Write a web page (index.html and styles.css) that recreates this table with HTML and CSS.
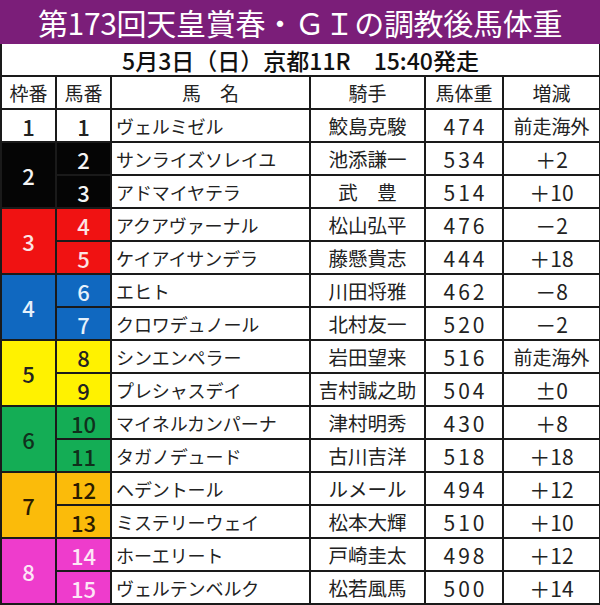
FILE: index.html
```html
<!DOCTYPE html>
<html lang="ja">
<head>
<meta charset="utf-8">
<link rel="stylesheet" href="styles.css">
</head>
<body>
<div class="title">第173回天皇賞春・ＧＩの調教後馬体重</div>
<table class="tbl">
<colgroup>
<col class="c1"><col class="c2"><col class="c3"><col class="c4"><col class="c5"><col class="c6">
</colgroup>
<tr class="sub"><td colspan="6">5月3日（日）京都11R　15:40発走</td></tr>
<tr class="head"><td>枠番</td><td>馬番</td><td>馬　名</td><td>騎手</td><td>馬体重</td><td>増減</td></tr>
<tr><td class="w f1">1</td><td class="n f1">1</td><td class="name">ヴェルミゼル</td><td class="jk">鮫島克駿</td><td class="wt">474</td><td class="df sm">前走海外</td></tr>
<tr><td class="w f2" rowspan="2">2</td><td class="n f2">2</td><td class="name">サンライズソレイユ</td><td class="jk">池添謙一</td><td class="wt">534</td><td class="df">＋2</td></tr>
<tr><td class="n f2">3</td><td class="name">アドマイヤテラ</td><td class="jk">武　豊</td><td class="wt">514</td><td class="df">＋10</td></tr>
<tr><td class="w f3" rowspan="2">3</td><td class="n f3">4</td><td class="name">アクアヴァーナル</td><td class="jk">松山弘平</td><td class="wt">476</td><td class="df">－2</td></tr>
<tr><td class="n f3">5</td><td class="name">ケイアイサンデラ</td><td class="jk">藤懸貴志</td><td class="wt">444</td><td class="df">＋18</td></tr>
<tr><td class="w f4" rowspan="2">4</td><td class="n f4">6</td><td class="name">エヒト</td><td class="jk">川田将雅</td><td class="wt">462</td><td class="df">－8</td></tr>
<tr><td class="n f4">7</td><td class="name">クロワデュノール</td><td class="jk">北村友一</td><td class="wt">520</td><td class="df">－2</td></tr>
<tr><td class="w f5" rowspan="2">5</td><td class="n f5">8</td><td class="name">シンエンペラー</td><td class="jk">岩田望来</td><td class="wt">516</td><td class="df sm">前走海外</td></tr>
<tr><td class="n f5">9</td><td class="name">プレシャスデイ</td><td class="jk">吉村誠之助</td><td class="wt">504</td><td class="df">±0</td></tr>
<tr><td class="w f6" rowspan="2">6</td><td class="n f6">10</td><td class="name">マイネルカンパーナ</td><td class="jk">津村明秀</td><td class="wt">430</td><td class="df">＋8</td></tr>
<tr><td class="n f6">11</td><td class="name">タガノデュード</td><td class="jk">古川吉洋</td><td class="wt">518</td><td class="df">＋18</td></tr>
<tr><td class="w f7" rowspan="2">7</td><td class="n f7">12</td><td class="name">ヘデントール</td><td class="jk">ルメール</td><td class="wt">494</td><td class="df">＋12</td></tr>
<tr><td class="n f7">13</td><td class="name">ミステリーウェイ</td><td class="jk">松本大輝</td><td class="wt">510</td><td class="df">＋10</td></tr>
<tr><td class="w f8" rowspan="2">8</td><td class="n f8">14</td><td class="name">ホーエリート</td><td class="jk">戸崎圭太</td><td class="wt">498</td><td class="df">＋12</td></tr>
<tr><td class="n f8">15</td><td class="name">ヴェルテンベルク</td><td class="jk">松若風馬</td><td class="wt">500</td><td class="df">＋14</td></tr>
</table>
</body>
</html>
```

FILE: styles.css
```css
html, body {
  margin: 0;
  padding: 0;
  background: #ffffff;
}
body {
  width: 600px;
  font-family: "Noto Sans CJK JP", "Noto Sans", sans-serif;
  color: #222222;
}
.title {
  height: 44px;
  background: #7b1e79;
  color: #ffffff;
  font-size: 30px;
  font-weight: 400;
  line-height: 44px;
  text-align: center;
  letter-spacing: -0.3px;
}
.tbl {
  border-collapse: collapse;
  table-layout: fixed;
  width: 599px;
}
.c1 { width: 55px; }
.c2 { width: 55px; }
.c3 { width: 199px; }
.c4 { width: 115px; }
.c5 { width: 78px; }
.c6 { width: 97px; }
.tbl td {
  border: 2px solid #1a1a1a;
  padding: 0;
  height: 31px;
  text-align: center;
  white-space: nowrap;
  overflow: hidden;
  line-height: 30px;
}
.tbl tr.sub td {
  border-top: none;
  height: 31px;
  font-size: 23px;
  font-weight: 500;
  color: #111111;
}
.tbl tr.head td {
  font-size: 19px;
  color: #222222;
}
.tbl td.w,
.tbl td.n {
  font-size: 22px;
  font-weight: 500;
}
.tbl td.name {
  text-align: left;
  padding-left: 4px;
  font-size: 18px;
  letter-spacing: -0.1px;
}
.tbl td.jk {
  font-size: 19.5px;
}
.tbl td.wt {
  font-size: 21px;
  letter-spacing: 3px;
  padding-left: 3px;
}
.tbl td.df {
  font-size: 21px;
}
.tbl td.df.sm {
  font-size: 19px;
}
.f1 { background: #ffffff; color: #222222; }
.f2 { background: #050505; color: #f4f4f4; }
.f3 { background: #f01212; color: #fbe4e4; }
.f4 { background: #1068c0; color: #e6f1fb; }
.f5 { background: #fff200; color: #222222; }
.f6 { background: #14ad55; color: #10301c; }
.f7 { background: #fbbb0a; color: #2b1c00; }
.f8 { background: #ee3ccc; color: #fde6f6; }
```
